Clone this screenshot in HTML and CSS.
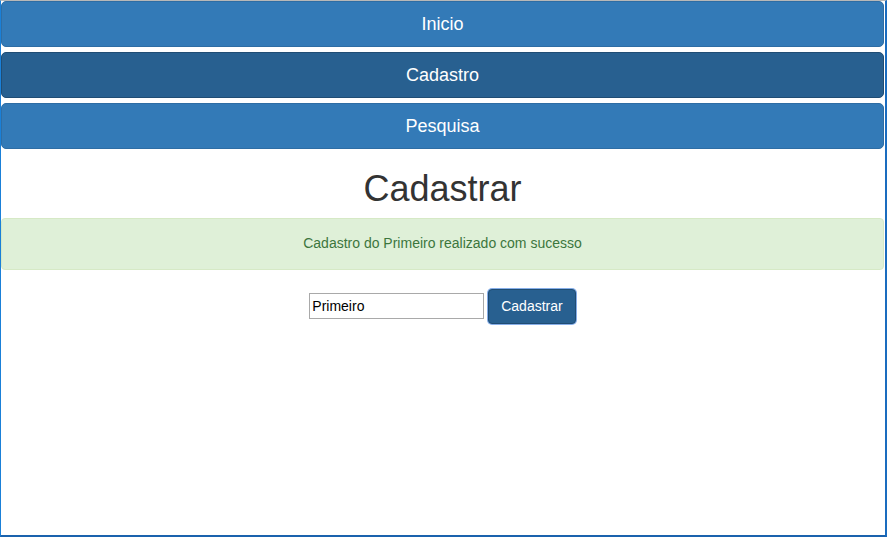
FILE: index.html
```html
<!DOCTYPE html>
<html lang="pt">
<head>
<meta charset="utf-8">
<title>Cadastrar</title>
<link rel="stylesheet" href="styles.css">
</head>
<body>
<div class="frame">
  <nav class="menu">
    <a class="btn-nav" href="#">Inicio</a>
    <a class="btn-nav active" href="#">Cadastro</a>
    <a class="btn-nav" href="#">Pesquisa</a>
  </nav>
  <h1 class="title">Cadastrar</h1>
  <div class="alert">Cadastro do Primeiro realizado com sucesso</div>
  <form class="form">
    <input class="field" type="text" value="Primeiro">
    <button class="btn-submit" type="button">Cadastrar</button>
  </form>
</div>
</body>
</html>
```
FILE: styles.css
```css
* { box-sizing: border-box; }
html, body { margin: 0; padding: 0; background: #fff; }
body {
  font-family: "Liberation Sans", Arial, sans-serif;
  font-size: 14px;
  line-height: 1.42857;
  color: #333;
}
.frame {
  height: 537px;
  border-top: 1px solid #b8b8b8;
  border-left: 1px solid #1a80d8;
  border-right: 2px solid #1a6cbf;
  border-bottom: 2px solid #1a62ad;
  padding-right: 1px;
  overflow: hidden;
}
.menu {
  display: flex;
  flex-direction: column;
  gap: 5px;
}
.btn-nav {
  display: block;
  height: 46px;
  padding: 10px 16px;
  font-size: 18px;
  line-height: 24px;
  text-align: center;
  text-decoration: none;
  color: #fff;
  background: #337ab7;
  border: 1px solid #2e6da4;
  border-radius: 5px;
}
.btn-nav.active {
  background: #286090;
  border-color: #204d74;
}
.title {
  margin: 20px 0 9px;
  font-size: 36px;
  font-weight: 500;
  line-height: 1.1;
  text-align: center;
  color: #333;
}
.alert {
  padding: 15px;
  margin-bottom: 19px;
  text-align: center;
  color: #3c763d;
  background: #dff0d8;
  border: 1px solid #d6e9c6;
  border-radius: 4px;
}
.form {
  text-align: center;
  margin: 0;
}
.field {
  width: 175px;
  height: 26px;
  padding: 1px 2px;
  font-family: "Liberation Sans", Arial, sans-serif;
  font-size: 14px;
  color: #000;
  border: 1px solid #a9a9a9;
  vertical-align: middle;
}
.btn-submit {
  height: 35px;
  padding: 6px 12px;
  font-family: "Liberation Sans", Arial, sans-serif;
  font-size: 14px;
  line-height: 20px;
  color: #fff;
  background: #286090;
  border: 1px solid #204d74;
  border-radius: 4px;
  box-shadow: 0 0 0 1px #86aee8;
  vertical-align: middle;
}
```
